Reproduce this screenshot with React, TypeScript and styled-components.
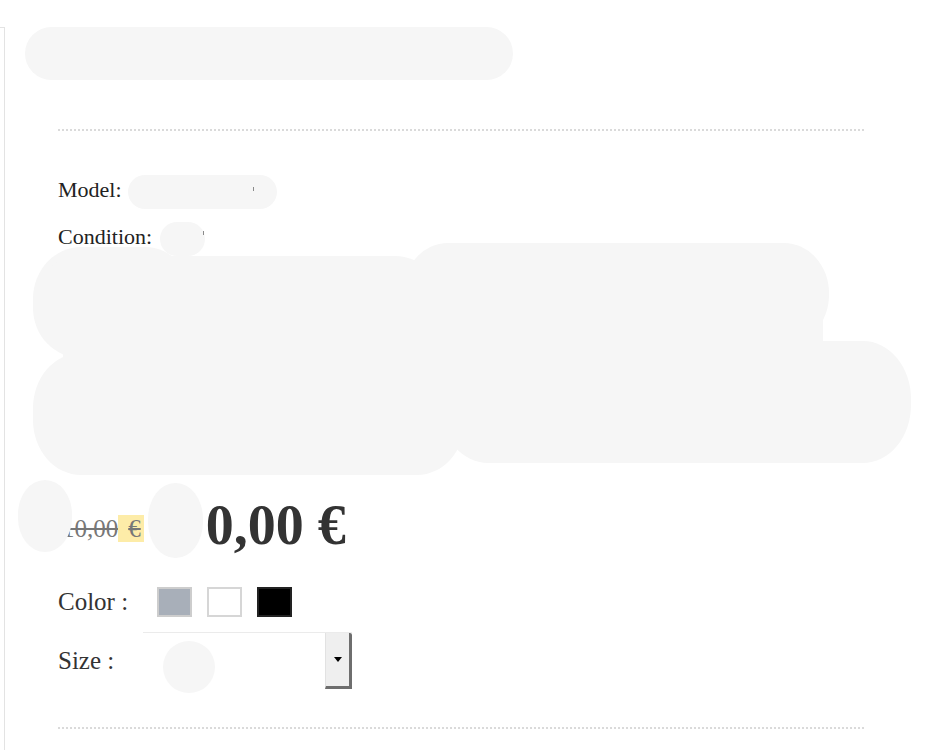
import React from 'react';
import styled, { createGlobalStyle } from 'styled-components';

const GlobalStyle = createGlobalStyle`
  html, body { margin: 0; padding: 0; background: #ffffff; }
  body {
    font-family: "Liberation Serif", "Times New Roman", serif;
    color: #333333;
  }
`;

const REDACT = '#f6f6f6';

const Page = styled.div`
  display: flex;
  align-items: flex-start;
  height: 750px;
  padding-top: 27px;
  box-sizing: border-box;
  overflow: hidden;
`;

const SideEdge = styled.div`
  flex: none;
  width: 4px;
  height: 723px;
  border-top: 1px solid #e3e3e3;
  border-right: 1px solid #e3e3e3;
`;

const Main = styled.main`
  flex: 1;
  display: flex;
  flex-direction: column;
`;

const TitleBlob = styled.div`
  margin-left: 20px;
  width: 488px;
  height: 53px;
  border-radius: 27px;
  background: ${REDACT};
`;

const Content = styled.section`
  display: flex;
  flex-direction: column;
  padding: 0 67px 0 53px;
`;

const Divider = styled.hr<{ $top: number }>`
  margin: ${(p) => p.$top}px 0 0;
  width: 806px;
  height: 0;
  border: 0;
  border-top: 2px dotted #dadada;
`;

const InfoRow = styled.div<{ $top: number }>`
  display: flex;
  align-items: center;
  height: 26px;
  margin-top: ${(p) => p.$top}px;
  font-size: 22px;
  line-height: 26px;
  color: #222222;
`;

const ValueBlob = styled.span<{ $w: number; $gap: number }>`
  position: relative;
  flex: none;
  width: ${(p) => p.$w}px;
  height: 34px;
  margin-left: ${(p) => p.$gap}px;
  margin-top: 4px;
  border-radius: 17px;
  background: ${REDACT};
`;

const Speck = styled.i<{ $x: number; $y: number }>`
  position: absolute;
  left: ${(p) => p.$x}px;
  top: ${(p) => p.$y}px;
  width: 1px;
  height: 4px;
  background: #8a8a8a;
`;

const Description = styled.div`
  margin: -7px 0 0 -25px;
  width: 878px;
  height: 232px;
`;

const PriceRow = styled.div`
  position: relative;
  display: flex;
  align-items: center;
  height: 91px;
  margin-top: 8px;
`;

const LeadBlob = styled.span`
  position: absolute;
  left: -40px;
  top: -3px;
  width: 54px;
  height: 72px;
  border-radius: 27px / 34px;
  background: ${REDACT};
`;

const OldPrice = styled.span`
  margin-left: 4px;
  font-size: 25px;
  line-height: 28px;
  color: #777777;
  text-decoration: line-through;
  white-space: nowrap;
`;

const Highlight = styled.span`
  padding: 0 3px 0 10px;
  background: #fdeca8;
`;

const MidBlob = styled.span`
  flex: none;
  width: 55px;
  height: 75px;
  margin: 0 3px 16px 4px;
  border-radius: 27px / 36px;
  background: ${REDACT};
`;

const NewPrice = styled.span`
  margin-bottom: 7px;
  font-size: 56px;
  line-height: 60px;
  font-weight: bold;
  color: #333333;
  white-space: nowrap;
`;

const OptionRow = styled.div<{ $top: number; $h: number }>`
  display: flex;
  align-items: center;
  height: ${(p) => p.$h}px;
  margin-top: ${(p) => p.$top}px;
`;

const Label = styled.span`
  margin-right: 29px;
  font-size: 25px;
  line-height: 30px;
  color: #333333;
  white-space: nowrap;
`;

const Swatches = styled.div`
  display: flex;
  gap: 15px;
`;

const Swatch = styled.span<{ $fill: string; $edge: string }>`
  width: 35px;
  height: 30px;
  box-sizing: border-box;
  background: ${(p) => p.$fill};
  border: 2px solid ${(p) => p.$edge};
`;

const SelectBox = styled.div`
  display: flex;
  align-items: flex-start;
  width: 209px;
  height: 57px;
  box-sizing: border-box;
  border-top: 1px solid #ebebeb;
  background: #ffffff;
`;

const SelectBlob = styled.span`
  flex: none;
  width: 52px;
  height: 52px;
  margin: 8px 0 0 20px;
  border-radius: 50%;
  background: ${REDACT};
`;

const DropButton = styled.span`
  display: flex;
  align-items: center;
  justify-content: center;
  margin-left: auto;
  width: 27px;
  height: 100%;
  box-sizing: border-box;
  background: #efefef;
  border-left: 1px solid #e2e2e2;
  border-right: 3px solid #6e6e6e;
  border-bottom: 3px solid #6e6e6e;
  border-top-right-radius: 2px;
`;

const Arrow = styled.span`
  width: 0;
  height: 0;
  border-left: 4px solid transparent;
  border-right: 4px solid transparent;
  border-top: 5px solid #000000;
`;

const DescriptionShape: React.FC = () => (
  <svg width="878" height="232" viewBox="0 0 878 232" style={{ display: 'block' }}>
    <g fill={REDACT}>
      <rect x="0" y="4" width="160" height="108" rx="48" ry="52" />
      <rect x="0" y="13" width="410" height="102" rx="48" ry="50" />
      <rect x="370" y="0" width="426" height="102" rx="45" ry="50" />
      <rect x="0" y="110" width="432" height="122" rx="48" ry="55" />
      <rect x="407" y="98" width="471" height="122" rx="48" ry="58" />
      <rect x="30" y="40" width="760" height="150" />
    </g>
  </svg>
);

export default function App() {
  return (
    <>
      <GlobalStyle />
      <Page>
        <SideEdge />
        <Main>
          <TitleBlob />
          <Content>
            <Divider $top={49} />
            <InfoRow $top={46}>
              Model:
              <ValueBlob $w={149} $gap={6}>
                <Speck $x={125} $y={12} />
              </ValueBlob>
            </InfoRow>
            <InfoRow $top={21}>
              Condition:
              <ValueBlob $w={45} $gap={8}>
                <Speck $x={43} $y={9} />
              </ValueBlob>
            </InfoRow>
            <Description>
              <DescriptionShape />
            </Description>
            <PriceRow>
              <OldPrice>
                10,00<Highlight>€</Highlight>
              </OldPrice>
              <LeadBlob />
              <MidBlob />
              <NewPrice>0,00 €</NewPrice>
            </PriceRow>
            <OptionRow $top={13} $h={30}>
              <Label>Color :</Label>
              <Swatches>
                <Swatch $fill="#a8afb9" $edge="#cdcdcd" />
                <Swatch $fill="#ffffff" $edge="#d6d6d6" />
                <Swatch $fill="#000000" $edge="#222222" />
              </Swatches>
            </OptionRow>
            <OptionRow $top={15} $h={57}>
              <Label>Size :</Label>
              <SelectBox>
                <SelectBlob />
                <DropButton>
                  <Arrow />
                </DropButton>
              </SelectBox>
            </OptionRow>
            <Divider $top={38} />
          </Content>
        </Main>
      </Page>
    </>
  );
}
